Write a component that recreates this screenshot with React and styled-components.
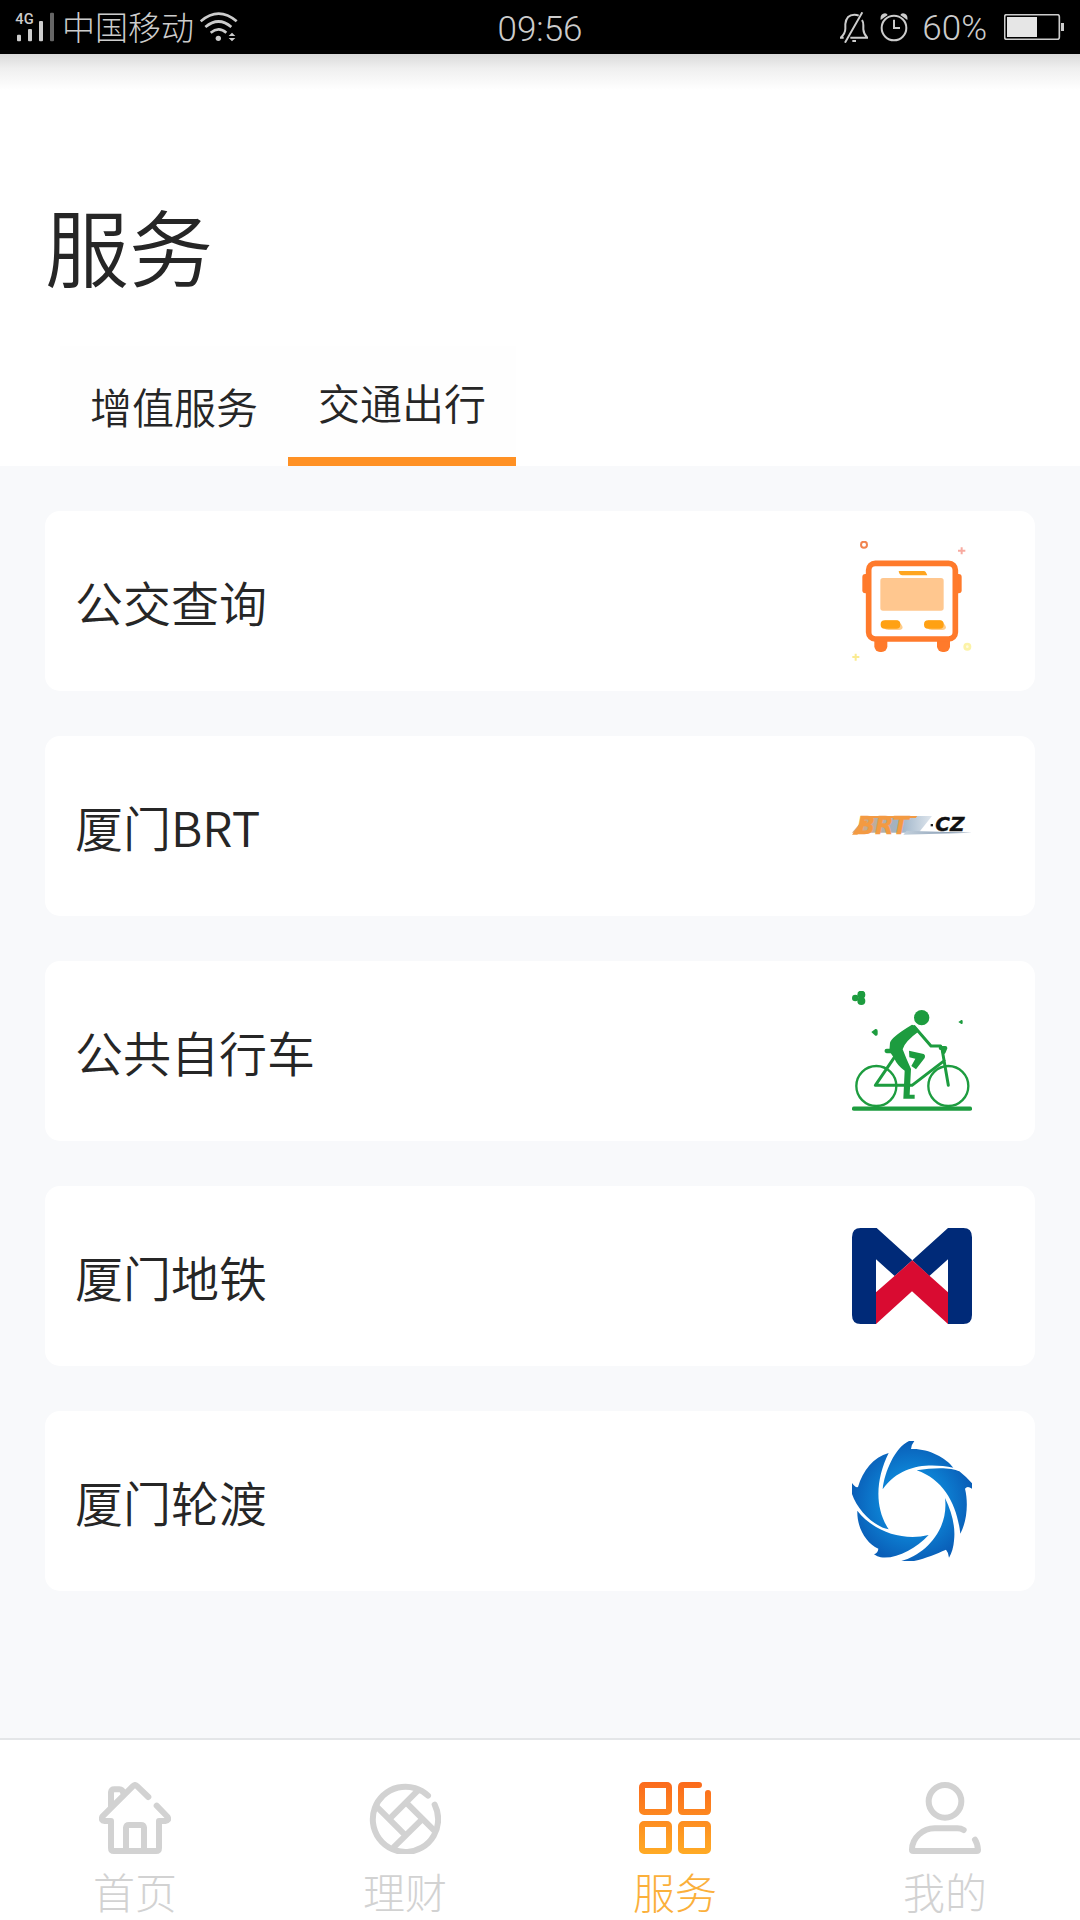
import React, { useState } from "react";
import styled, { createGlobalStyle } from "styled-components";

const GlobalStyle = createGlobalStyle`
  *, *::before, *::after { box-sizing: border-box; }
  body {
    margin: 0;
    background: #f8f9fb;
    color: #262626;
    font-family: "Noto Sans CJK SC", sans-serif;
    font-weight: 350;
  }
  button { font: inherit; color: inherit; border: 0; padding: 0; background: none; cursor: pointer; }
  a { color: inherit; text-decoration: none; }
  svg { display: block; }
`;

const Screen = styled.div`
  min-height: 100vh;
  display: flex;
  flex-direction: column;
`;

const StatusBar = styled.div`
  display: grid;
  grid-template-columns: 1fr auto 1fr;
  align-items: center;
  height: 54px;
  padding: 0 15px;
  background: #000;
  color: #ccc;
  font-family: Roboto, "Noto Sans CJK SC", sans-serif;
  font-size: 35px;
  line-height: 48px;
`;

const StatusGroup = styled.div`
  display: flex;
  align-items: center;
  justify-content: ${(p) => (p.$end ? "flex-end" : "flex-start")};
  gap: ${(p) => (p.$end ? 12 : 6)}px;
`;

const Carrier = styled.span`
  padding-top: 3px;
  font-size: 33px;
  font-weight: 300;
`;

const Clock = styled.time`
  padding-top: 6px;
`;

const BatteryLevel = styled.span`
  padding: 3px 5px 0 2px;
`;

const Header = styled.header`
  display: flex;
  flex-direction: column;
  background: linear-gradient(#dadada, #efefef 14px, #fff 36px);
`;

const Title = styled.h1`
  margin: 0;
  padding: 131px 45px 41px;
  font-size: 84px;
  font-weight: 350;
  line-height: 120px;
`;

const Tabs = styled.div`
  display: flex;
  padding-left: 60px;
  font-size: 42px;
  line-height: 60px;
`;

const TabButton = styled.button.attrs({ type: "button", role: "tab" })`
  display: flex;
  align-items: flex-start;
  height: 120px;
  padding: ${(p) => (p.$active ? 26 : 30)}px 30px 0;
  border-bottom: 9px solid ${(p) => (p.$active ? "#ff9124" : "transparent")};
  background: #fefefe;
`;

const List = styled.ul`
  flex: 1;
  display: flex;
  flex-direction: column;
  gap: 45px;
  margin: 0;
  padding: 45px;
  list-style: none;
`;

const Card = styled.a`
  display: flex;
  align-items: center;
  justify-content: space-between;
  min-height: 180px;
  padding: 30px 63px 30px 30px;
  border-radius: 15px;
  background: #fff;
  font-size: 48px;
  line-height: 72px;
`;

const CardIcon = styled.svg.attrs({ "aria-hidden": true })`
  width: 120px;
  height: 120px;
  flex: none;
`;

const Nav = styled.nav`
  display: grid;
  grid-template-columns: repeat(4, 1fr);
  height: 182px;
  border-top: 2px solid #e4e6e8;
  background: #fff;
  font-weight: 300;
`;

const NavItem = styled.a`
  display: flex;
  flex-direction: column;
  align-items: center;
  padding-top: 42px;
  gap: 7px;
  color: ${(p) => (p.$active ? "#fbb03b" : "#d2d2d2")};
  font-size: 42px;
  line-height: 60px;
`;

const NavIcon = styled.svg.attrs({ "aria-hidden": true })`
  width: 72px;
  height: 72px;
  fill: none;
  stroke: currentColor;
  stroke-width: 18;
  stroke-linecap: round;
  stroke-linejoin: round;
`;

function SignalIcon() {
  return (
    <svg width="41" height="54" viewBox="45 0 123 162" fill="#ccc">
      <text x="46" y="72" fontFamily="Roboto, sans-serif" fontSize="44" fontWeight="500">4G</text>
      <rect x="51" y="104" width="12" height="20" rx="3" />
      <rect x="84" y="87" width="12" height="37" rx="3" />
      <rect x="117" y="63" width="12" height="61" rx="3" />
      <rect x="150" y="38" width="12" height="86" rx="3" fill="#666" />
    </svg>
  );
}

function WifiIcon() {
  return (
    <svg width="38" height="30" viewBox="600 36 114 90" fill="none" stroke="#ccc" strokeWidth="8">
      <path d="M602 64Q656 18 710 64M616 81Q656 48 694 81M632 98Q656 78 679 98" />
      <circle cx="655" cy="115" r="8" fill="#ccc" stroke="none" />
      <path d="M686 108L696 98L706 108ZM686 114L696 124L706 114Z" fill="#ccc" stroke="none" />
    </svg>
  );
}

function MuteIcon() {
  return (
    <svg width="28" height="31" viewBox="117 36 84 93" fill="none" stroke="#ccc" strokeWidth="6">
      <path d="M128 113H119Q133 100 133 86V72Q136 44 160 44Q168 44 173 47M183 60Q187 66 187 76V88Q188 102 199 113H148M154 123H165M184 37L132 128" />
    </svg>
  );
}

function AlarmIcon() {
  return (
    <svg width="28" height="30" viewBox="237 36 84 90" fill="none" stroke="#ccc" strokeWidth="6">
      <circle cx="279" cy="84" r="37" />
      <path d="M279 59V84H297" />
      <path d="M239 60Q236 42 252 40Q258 40 260 45ZM319 60Q322 42 306 40Q300 40 298 45Z" fill="#ccc" stroke="none" />
    </svg>
  );
}

function BatteryIcon() {
  return (
    <svg width="61" height="26" viewBox="612 42 183 78" fill="none">
      <rect x="614" y="44" width="164" height="74" rx="6" stroke="#ccc" strokeWidth="5" />
      <rect x="621" y="51" width="90" height="60" fill="#e6e6e6" />
      <rect x="783" y="69" width="9" height="24" fill="#ccc" />
    </svg>
  );
}

function BusIcon() {
  return (
    <CardIcon viewBox="66 63 360 360">
      <rect x="97" y="162" width="22" height="58" rx="9" fill="#ff7a2b" />
      <rect x="373" y="162" width="22" height="58" rx="9" fill="#ff7a2b" />
      <rect x="133" y="345" width="39" height="51" rx="17" fill="#ff7a2b" />
      <rect x="321" y="345" width="39" height="51" rx="17" fill="#ff7a2b" />
      <rect x="116" y="130" width="260" height="227" rx="20" fill="#fff" stroke="#ff7a2b" strokeWidth="17" />
      <path d="M206 153H282Q287 153 292 166H217Q208 166 206 153Z" fill="#ffa51f" />
      <rect x="151" y="174" width="190" height="98" rx="8" fill="#ffc78f" />
      <path d="M164 301H203Q216 314 218 322Q217 330 207 330H176Q166 330 162 323Z" fill="#ffcd8b" />
      <path d="M294 301H333Q346 314 348 322Q347 330 337 330H306Q296 330 292 323Z" fill="#ffcd8b" />
      <rect x="152" y="301" width="59" height="25" rx="12" fill="#ffa113" />
      <rect x="282" y="301" width="59" height="25" rx="12" fill="#ffa113" />
      <circle cx="102" cy="74" r="9" fill="none" stroke="#f18450" strokeWidth="6" />
      <path d="M395 82V103M384 92H406" stroke="#f8aaa0" strokeWidth="6" />
      <path d="M77 401V422M67 411H88" stroke="#faeb91" strokeWidth="6" />
      <circle cx="412" cy="380" r="8" fill="#fffbe0" stroke="#fcf3a8" strokeWidth="8" />
    </CardIcon>
  );
}

function BrtIcon() {
  return (
    <CardIcon viewBox="66 -72 360 360">
      <defs>
        <linearGradient id="brtStripe" x1="0" x2="1">
          <stop offset="0" stopColor="#d9a878" />
          <stop offset="0.6" stopColor="#9db3c8" />
          <stop offset="1" stopColor="#dfe6ed" />
        </linearGradient>
        <linearGradient id="brtLine" x1="0" x2="1">
          <stop offset="0" stopColor="#c3d0dc" />
          <stop offset="1" stopColor="#6f87a3" />
        </linearGradient>
      </defs>
      <path d="M108 78H306L266 128H66Z" fill="url(#brtStripe)" />
      <path d="M230 122L428 128L220 134Z" fill="url(#brtLine)" />
      <path d="M108 78H262L257 84H103ZM96 92H112L82 134H66Z" fill="#f39a42" />
      <text x="80" y="133" fill="#f39a42" stroke="#f39a42" strokeWidth="1" fontFamily="DejaVu Sans, Liberation Sans, sans-serif" fontSize="72" fontWeight="700" fontStyle="italic">BRT</text>
      <rect x="302" y="102" width="7" height="7" fill="#222" />
      <text x="316" y="124" fill="#111" stroke="#111" strokeWidth="1" fontFamily="DejaVu Sans, Liberation Sans, sans-serif" fontSize="60" fontWeight="700" fontStyle="italic">CZ</text>
    </CardIcon>
  );
}

function BikeIcon() {
  return (
    <CardIcon viewBox="66 63 360 360" fill="none" stroke="#1d9c3f" strokeLinecap="round" strokeLinejoin="round">
      <g strokeWidth="7">
        <circle cx="139" cy="348" r="60" />
        <circle cx="355" cy="348" r="60" />
      </g>
      <path d="M72 416H420" strokeWidth="13" />
      <path d="M193 262L136 346H246L343 272M336 236L355 346" strokeWidth="9" />
      <path d="M332 234H346L341 246" strokeWidth="12" />
      <path d="M170 243H192" strokeWidth="13" />
      <circle cx="275" cy="143" r="23" fill="#1d9c3f" stroke="none" />
      <path d="M253 170L303 228H332" strokeWidth="9" />
      <path d="M246 164Q184 201 180 218L178 243L192 264Q202 287 224 302L220 386H254V374H239L243 297Q229 267 218 238Q224 215 267 184Q258 166 246 164Z" fill="#1d9c3f" stroke="none" />
      <path d="M237 242L281 252Q287 255 284 264L258 298L244 288L256 266L238 262Z" fill="#1d9c3f" stroke="none" />
      <g fill="#1d9c3f" stroke="none">
        <circle cx="94" cy="74" r="12" />
        <circle cx="94" cy="93" r="12" />
        <circle cx="76" cy="84" r="10" />
        <path d="M124 186L136 177Q143 176 143 183V192Q143 199 136 197ZM385 156L394 150Q398 149 398 154V159Q398 163 394 162Z" />
      </g>
    </CardIcon>
  );
}

function MetroIcon() {
  return (
    <CardIcon viewBox="66 18 360 360">
      <path d="M66 82Q66 54 92 54H140L247 151L354 54H400Q426 54 426 82V315Q426 342 400 342H354V148L298 198L247 151L194 198L138 148V342H92Q66 342 66 315Z" fill="#002a78" />
      <path d="M247 151L354 247V342L246 244L138 342V247Z" fill="#d90b31" />
    </CardIcon>
  );
}

function FerryIcon() {
  return (
    <CardIcon viewBox="66 63 360 360">
      <defs>
        <radialGradient id="ferryBlue" gradientUnits="userSpaceOnUse" cx="246" cy="246" r="180">
          <stop offset="0.5" stopColor="#0d84d6" />
          <stop offset="1" stopColor="#0a5fb8" />
        </radialGradient>
      </defs>
      <g fill="url(#ferryBlue)">
        <path d="M158 208C164 155 195 82 237 63H253Q244 74 243 87C292 84 347 112 370 143C300 130 214 130 158 208Z" />
        <path d="M260 151C312 142 365 142 388 154Q406 168 426 190V206Q412 196 405 206C416 250 410 306 391 341C382 260 345 180 260 151Z" />
        <path d="M345 234C366 276 377 322 372 362Q370 390 357 413Q356 398 348 389C318 402 290 414 252 423H214C285 404 357 330 345 234Z" />
        <path d="M82 272C132 336 220 364 296 345C256 387 200 418 152 412Q142 410 132 403Q144 399 145 386C108 370 80 322 82 272Z" />
        <path d="M176 99C138 176 132 260 176 328C132 320 82 270 66 222V189Q76 204 84 201C98 152 130 112 176 99Z" />
      </g>
    </CardIcon>
  );
}

function HomeIcon() {
  return (
    <NavIcon viewBox="117 186 216 216">
      <path d="M265 231L232 199Q225 192 218 199L127 290Q122 302 134 303H153V384Q153 393 162 393H288Q297 393 297 384V303H316Q328 302 323 291L290 257M153 262V217Q154 208 163 208H178Q188 208 190 220M198 388V323Q199 315 207 315H243Q251 315 252 323V388" />
    </NavIcon>
  );
}

function FinanceIcon() {
  return (
    <NavIcon viewBox="927 186 216 216">
      <path d="M1104 227A98 98 0 1 0 1124 254" />
      <path d="M1074 211L990 295M947 257L1034 344M1000 383L1086 298M1038 247L1123 332" strokeLinecap="butt" />
    </NavIcon>
  );
}

function ServiceIcon() {
  return (
    <NavIcon viewBox="117 186 216 216">
      <defs>
        <linearGradient id="serviceFade" gradientUnits="userSpaceOnUse" x1="0" y1="186" x2="0" y2="402">
          <stop offset="0" stopColor="#fb6a1c" />
          <stop offset="1" stopColor="#ffab25" />
        </linearGradient>
      </defs>
      <g stroke="url(#serviceFade)">
        <rect x="126" y="195" width="81" height="81" rx="6" />
        <path d="M297 195H249Q243 195 243 201V270Q243 276 249 276H318Q324 276 324 270V219" />
        <rect x="126" y="312" width="81" height="81" rx="6" />
        <rect x="243" y="312" width="81" height="81" rx="6" />
      </g>
    </NavIcon>
  );
}

function ProfileIcon() {
  return (
    <NavIcon viewBox="927 186 216 216">
      <circle cx="1035" cy="244" r="49" />
      <path d="M1091 330Q1083 325 1072 325H1004C970 325 936 352 936 389Q936 393 940 393H1130Q1134 393 1134 389C1133 376 1131 368 1125 359" />
    </NavIcon>
  );
}

const tabs = ["增值服务", "交通出行"];

const services = [
  { name: "公交查询", Icon: BusIcon },
  { name: "厦门BRT", Icon: BrtIcon },
  { name: "公共自行车", Icon: BikeIcon },
  { name: "厦门地铁", Icon: MetroIcon },
  { name: "厦门轮渡", Icon: FerryIcon },
];

const navItems = [
  { name: "首页", Icon: HomeIcon },
  { name: "理财", Icon: FinanceIcon },
  { name: "服务", Icon: ServiceIcon, active: true },
  { name: "我的", Icon: ProfileIcon },
];

export default function App() {
  const [current, setCurrent] = useState("交通出行");
  return (
    <Screen lang="zh-CN">
      <GlobalStyle />
      <StatusBar>
        <StatusGroup>
          <SignalIcon />
          <Carrier>中国移动</Carrier>
          <WifiIcon />
        </StatusGroup>
        <Clock>09:56</Clock>
        <StatusGroup $end>
          <MuteIcon />
          <AlarmIcon />
          <BatteryLevel>60%</BatteryLevel>
          <BatteryIcon />
        </StatusGroup>
      </StatusBar>
      <Header>
        <Title>服务</Title>
        <Tabs role="tablist">
          {tabs.map((name) => (
            <TabButton key={name} $active={name === current} aria-selected={name === current} onClick={() => setCurrent(name)}>
              {name}
            </TabButton>
          ))}
        </Tabs>
      </Header>
      <List>
        {services.map(({ name, Icon }) => (
          <li key={name}>
            <Card href="#">
              <span>{name}</span>
              <Icon />
            </Card>
          </li>
        ))}
      </List>
      <Nav>
        {navItems.map(({ name, Icon, active }) => (
          <NavItem key={name} href="#" $active={active} aria-current={active ? "page" : undefined}>
            <Icon />
            <span>{name}</span>
          </NavItem>
        ))}
      </Nav>
    </Screen>
  );
}
